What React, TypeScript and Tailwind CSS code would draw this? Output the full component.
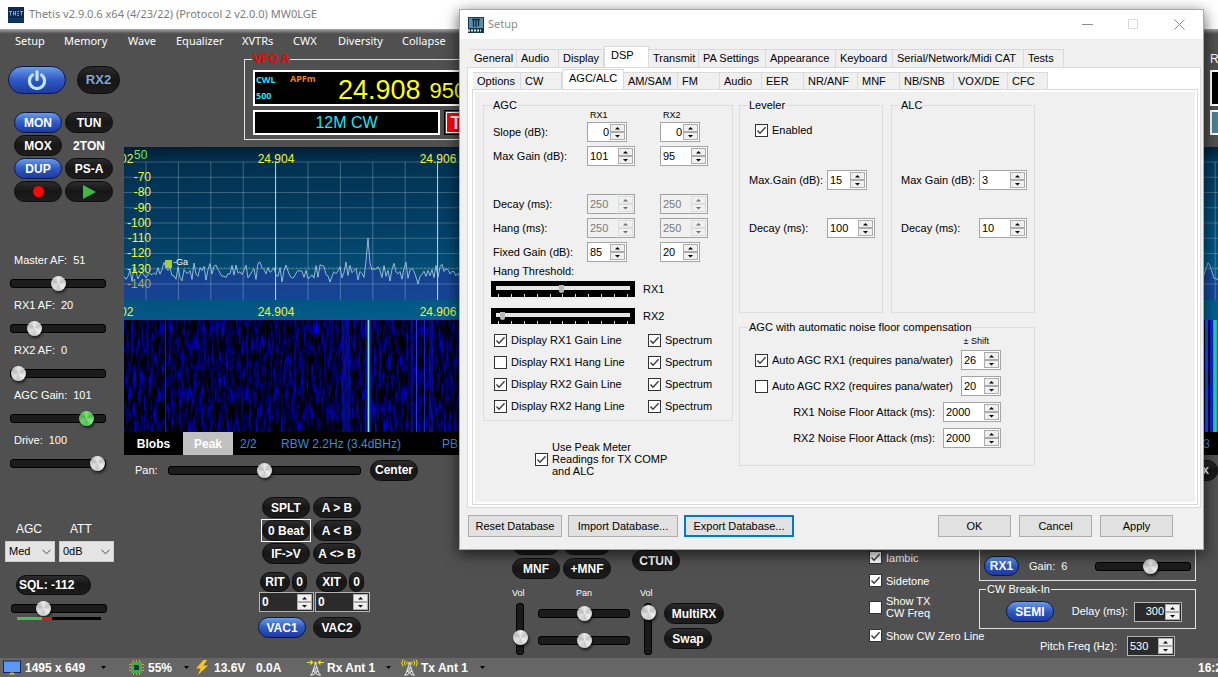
import { FC, ReactNode, useState } from "react";
import clsx from "clsx";

const pillBase = "flex items-center justify-center rounded-full border text-xs font-bold whitespace-nowrap";
const pillDark = "border-[#0c0c0c] bg-linear-to-b from-[#2b2b2b] via-[#161616] to-[#1d1d1d] text-white";
const pillBlue = "border-[#0b1a45] bg-linear-to-b from-[#6d9be6] via-[#2f59c4] to-[#1f3a9e] text-white";

const Pill: FC<{ children: ReactNode; on?: boolean; className?: string; label?: string }> = ({
    children,
    on,
    className = "w-12 h-[21px]",
    label,
}) => (
    <button type="button" aria-label={label} className={clsx(pillBase, on ? pillBlue : pillDark, className)}>
        {children}
    </button>
);

const thumb =
    "[&::-webkit-slider-thumb]:appearance-none [&::-webkit-slider-thumb]:size-[15px] [&::-webkit-slider-thumb]:rounded-full [&::-webkit-slider-thumb]:shadow-[1px_2px_3px_#000000aa]";
const silver =
    "[&::-webkit-slider-thumb]:bg-[conic-gradient(#e8e8e8,#c4c4c4,#efefef,#cacaca,#e0e0e0,#bcbcbc,#e8e8e8)]";
const green =
    "[&::-webkit-slider-thumb]:bg-[conic-gradient(#7fe07f,#4cb84c,#8be88b,#54c054,#6cd06c,#48b448,#7fe07f)]";

const Slider: FC<{ label: string; value: number; className?: string; tone?: "silver" | "green" }> = ({
    label,
    value,
    className = "w-24",
    tone = "silver",
}) => (
    <input
        type="range"
        aria-label={label}
        defaultValue={value}
        className={clsx(
            "block h-5 appearance-none bg-transparent",
            "[&::-webkit-slider-runnable-track]:h-[9px] [&::-webkit-slider-runnable-track]:rounded-[3px] [&::-webkit-slider-runnable-track]:border [&::-webkit-slider-runnable-track]:border-black [&::-webkit-slider-runnable-track]:bg-[#1c1c1c]",
            "[&::-webkit-slider-thumb]:mt-[-4px]",
            thumb,
            tone === "green" ? green : silver,
            className
        )}
    />
);

const VSlider: FC<{ label: string; value: number }> = ({ label, value }) => (
    <input
        type="range"
        aria-label={label}
        defaultValue={value}
        className={clsx(
            "block h-[52px] w-4 appearance-none bg-transparent [writing-mode:vertical-lr] [direction:rtl]",
            "[&::-webkit-slider-runnable-track]:w-2 [&::-webkit-slider-runnable-track]:rounded-[3px] [&::-webkit-slider-runnable-track]:border [&::-webkit-slider-runnable-track]:border-black [&::-webkit-slider-runnable-track]:bg-[#1b1b1b]",
            "[&::-webkit-slider-thumb]:ml-[-4px]",
            thumb,
            silver
        )}
    />
);

const Spinner: FC<{
    label: string;
    value: string;
    className?: string;
    disabled?: boolean;
    dark?: boolean;
    right?: boolean;
    bold?: boolean;
}> = ({ label, value, className = "w-12", disabled, dark, right, bold }) => (
    <span
        className={clsx(
            "flex h-5 shrink-0 border p-px",
            dark ? "border-[#b5b5b5] bg-[#2b2b2b] text-white" : "border-[#a5a5a5]",
            !dark && (disabled ? "bg-[#f0f0f0] text-[#7a7a7a]" : "bg-white text-black"),
            className
        )}
    >
        <input
            type="text"
            aria-label={label}
            defaultValue={value}
            disabled={disabled}
            className={clsx("min-w-0 flex-1 px-px", right && "text-right", bold ? "text-xs font-bold" : "text-[11px]")}
        />
        <span className="flex w-[15px] flex-col">
            {["M1 3.5h5L3.5 1z", "M1 1h5L3.5 3.5z"].map((d, i) => (
                <button
                    key={d}
                    type="button"
                    disabled={disabled}
                    aria-label={`${label} ${i === 0 ? "up" : "down"}`}
                    className={clsx(
                        "flex flex-1 items-center justify-center border bg-[#f0f0f0]",
                        disabled ? "border-[#dcdcdc] text-[#6d6d6d]" : "border-[#acacac] text-black"
                    )}
                >
                    <svg width="7" height="4" viewBox="0 0 7 4" fill="currentColor">
                        <path d={d} />
                    </svg>
                </button>
            ))}
        </span>
    </span>
);

const Check: FC<{ children: ReactNode; checked?: boolean; className?: string }> = ({
    children,
    checked,
    className,
}) => (
    <label className={clsx("flex items-center gap-1", className)}>
        <span className="grid size-[13px] shrink-0">
            <input
                type="checkbox"
                defaultChecked={checked}
                className="peer col-start-1 row-start-1 size-[13px] appearance-none border border-[#333333] bg-white"
            />
            <svg
                viewBox="0 0 13 13"
                className="pointer-events-none col-start-1 row-start-1 hidden size-[13px] peer-checked:block"
                fill="none"
                stroke="#3c3c3c"
                strokeWidth="1.4"
            >
                <path d="M2.5 6.5 5 9.2l5.6-6" />
            </svg>
        </span>
        <span className="whitespace-nowrap">{children}</span>
    </label>
);

const Group: FC<{ title: string; children: ReactNode; className?: string }> = ({ title, children, className }) => (
    <fieldset className={clsx("border border-[#dcdcdc]", className)}>
        <legend className="ml-2 h-3 px-px leading-3">{title}</legend>
        {children}
    </fieldset>
);

/* ---------- panadapter ---------- */

const rand = (i: number) => {
    const v = Math.sin(i * 127.1 + 11.7) * 43758.5453;
    return v - Math.floor(v);
};

const trace = Array.from({ length: 550 }, (_, i) => {
    const x = i * 2;
    let y = 125 + (rand(i) - 0.5) * 13 + (rand(i * 3 + 1) - 0.5) * 10;
    if (rand(i * 7 + 5) > 0.94) y += 8;
    if (x === 222) y = 115;
    if (x === 242) y = 114;
    if (x === 244) y = 91;
    if (x === 246) y = 116;
    return `${x},${y.toFixed(1)}`;
}).join(" ");

const vLines = Array.from({ length: 34 }, (_, i) => 22 + i * 32.4);
const hLines = Array.from({ length: 9 }, (_, i) => 15 + i * 15.25);
const dbm = [-70, -80, -90, -100, -110, -120, -130, -140];
const marks = [
    { x: 152, text: "24.904" },
    { x: 314, text: "24.906" },
];

const Spectrum: FC = () => (
    <svg className="block h-[173px] w-full" fontFamily="'Liberation Sans', Arial, sans-serif" fontSize="12">
        <defs>
            <linearGradient id="sky" x1="0" y1="0" x2="0.35" y2="1">
                <stop offset="0" stopColor="#022c49" />
                <stop offset="0.5" stopColor="#034066" />
                <stop offset="1" stopColor="#035f90" />
            </linearGradient>
            <linearGradient id="shade" x1="0" y1="0" x2="0" y2="1">
                <stop offset="0" stopColor="#021a2c" stopOpacity="0.7" />
                <stop offset="1" stopColor="#021a2c" stopOpacity="0" />
            </linearGradient>
        </defs>
        <rect width="100%" height="173" fill="url(#sky)" />
        <rect width="100%" height="14" fill="url(#shade)" />
        <polygon points={`0,153 ${trace} 1098,153`} fill="#2438a0" fillOpacity="0.55" />
        {hLines.map((y) => (
            <line key={y} x1="0" x2="100%" y1={y} y2={y} stroke="#ffffff" strokeOpacity="0.22" />
        ))}
        {vLines.map((x, i) => (
            <line key={x} x1={x} x2={x} y1="15" y2="153" stroke="#ffffff" strokeOpacity={i % 5 === 4 ? 0.8 : 0.25} />
        ))}
        <line x1="60" x2="100%" y1="121" y2="121" stroke="#4fae62" strokeOpacity="0.7" strokeDasharray="2 2" />
        <polyline points={trace} fill="none" stroke="#a9cbe6" strokeOpacity="0.85" strokeWidth="1" />
        <rect x="41" y="113" width="7" height="8" fill="#a4d02c" />
        <text x="49" y="118" fontSize="9" fill="#ffffff">
            -Ga
        </text>
        <text x="-4" y="16" fill="#f0f53a">
            02
        </text>
        <text x="10" y="12" fill="#6bf03a">
            50
        </text>
        {dbm.map((v, i) => (
            <text key={v} x="27" y={34 + i * 15.25} textAnchor="end" fill={v === -140 ? "#a8ad52" : "#f0f53a"}>
                {v}
            </text>
        ))}
        {marks.map((m) => (
            <g key={m.text} fill="#f0f53a" textAnchor="middle">
                <text x={m.x} y="16">
                    {m.text}
                </text>
                <text x={m.x} y="169">
                    {m.text}
                </text>
            </g>
        ))}
        <text x="-4" y="169" fill="#f0f53a">
            02
        </text>
    </svg>
);

const carriers = [
    { x: 41, w: 1, c: "#1a22c8", o: 0.8 },
    { x: 218, w: 8, c: "#0c14d0", o: 0.45 },
    { x: 241, w: 6, c: "#0c14d0", o: 0.5 },
    { x: 243, w: 3, c: "#1d6cf0", o: 0.8 },
    { x: 244, w: 1, c: "#6ff0c0", o: 1 },
    { x: 287, w: 2, c: "#0c14d0", o: 0.5 },
    { x: 292, w: 1, c: "#2a3cf0", o: 0.9 },
    { x: 300, w: 1, c: "#1a2ae0", o: 0.8 },
    { x: 305, w: 4, c: "#0c14d0", o: 0.4 },
    { x: 1081, w: 3, c: "#1060ff", o: 0.9 },
    { x: 1086, w: 3, c: "#0a2ae0", o: 0.9 },
    { x: 1089, w: 4, c: "#20c0e0", o: 0.9 },
    { x: 1090, w: 2, c: "#20e070", o: 0.9 },
    { x: 1093, w: 1, c: "#0a50ff", o: 1 },
];

const Waterfall: FC = () => (
    <svg className="block h-28 w-full bg-black">
        <defs>
            <filter id="noise" x="0" y="0" width="100%" height="100%" colorInterpolationFilters="sRGB">
                <feTurbulence type="fractalNoise" baseFrequency="0.4 0.06" numOctaves="3" seed="4" />
                <feColorMatrix values="0 0 0 0 0  0 0 0 0 0  2 0 0 0 -0.76  0 0 0 0 1" />
            </filter>
        </defs>
        <rect width="100%" height="112" filter="url(#noise)" />
        {carriers.map((c) => (
            <rect key={c.x} x={c.x} y="0" width={c.w} height="112" fill={c.c} fillOpacity={c.o} />
        ))}
    </svg>
);

/* ---------- main window ---------- */

const menu = [
    { text: "Setup", w: "w-[49px]" },
    { text: "Memory", w: "w-16" },
    { text: "Wave", w: "w-12" },
    { text: "Equalizer", w: "w-[66px]" },
    { text: "XVTRs", w: "w-[51px]" },
    { text: "CWX", w: "w-[45px]" },
    { text: "Diversity", w: "w-16" },
    { text: "Collapse", w: "w-16" },
];

const levels = [
    { text: "Master AF:", n: 51, value: 51 },
    { text: "RX1 AF:", n: 20, value: 20 },
    { text: "RX2 AF:", n: 0, value: 0 },
    { text: "AGC Gain:", n: 101, value: 86 },
    { text: "Drive:", n: 100, value: 100 },
];

const PowerIcon: FC = () => (
    <svg width="22" height="22" viewBox="0 0 22 22" fill="none" stroke="#c3e2ff" strokeWidth="3.2" strokeLinecap="round">
        <path d="M6.4 6A7.6 7.6 0 1 0 15.6 6" />
        <path d="M11 2.5v8" />
    </svg>
);

const Combo: FC<{ label: string; value: string; className: string }> = ({ label, value, className }) => (
    <label className={clsx("flex flex-col gap-[5px]", className)}>
        <span className="pl-[11px] text-xs leading-[14px]">{label}</span>
        <span className="grid items-center">
            <select className="col-start-1 row-start-1 h-[21px] appearance-none border border-[#cccccc] bg-[#e4e4e4] pl-[3px] text-[11px] text-black">
                <option>{value}</option>
            </select>
            <svg
                className="pointer-events-none col-start-1 row-start-1 mr-1 justify-self-end"
                width="9"
                height="6"
                viewBox="0 0 9 6"
                fill="none"
                stroke="#444444"
            >
                <path d="M.5.8 4.5 4.8 8.500.8" />
            </svg>
        </span>
    </label>
);

const LeftPanel: FC = () => (
    <aside className="flex w-[124px] shrink-0 flex-col pt-[13px]">
        <div className="flex gap-[11px] pl-2">
            <Pill on label="Power" className="h-7 w-[58px]">
                <PowerIcon />
            </Pill>
            <Pill className="h-7 w-[43px] !text-[#7fa6d6] text-[13px]">RX2</Pill>
        </div>
        <div className="mt-[18px] grid grid-cols-[48px_48px] gap-x-[3px] gap-y-0.5 pl-[14px]">
            <Pill on>MON</Pill>
            <Pill>TUN</Pill>
            <Pill>MOX</Pill>
            <button type="button" className="text-xs font-bold">
                2TON
            </button>
            <Pill on>DUP</Pill>
            <Pill>PS-A</Pill>
            <Pill label="Record">
                <span className="size-[11px] rounded-full bg-[#fb0505]" />
            </Pill>
            <Pill label="Play">
                <svg width="13" height="14" viewBox="0 0 13 14" fill="#3dba45">
                    <path d="M0 0 13 7 0 14z" />
                </svg>
            </Pill>
        </div>
        <div className="mt-[51px] flex flex-col gap-[5px]">
            {levels.map((l) => (
                <div key={l.text} className="flex flex-col gap-1.5 pl-[10px]">
                    <div className="flex gap-1.5 pl-1 text-[11px] leading-[14px]">
                        <span>{l.text}</span>
                        <span>{l.n}</span>
                    </div>
                    <Slider label={l.text} value={l.value} tone={l.n === 101 ? "green" : "silver"} />
                </div>
            ))}
        </div>
        <div className="mt-[49px] flex gap-1 pl-[5px]">
            <Combo label="AGC" value="Med" className="w-[50px]" />
            <Combo label="ATT" value="0dB" className="w-[55px]" />
        </div>
        <div className="mt-[13px] flex flex-col items-start pl-[11px]">
            <Pill className="ml-[5px] h-5 w-[75px] !justify-start pl-0.5">SQL: -112</Pill>
            <Slider label="Squelch" value={30} className="mt-[3px] w-24" />
            <div className="-mt-[1px] ml-1.5 flex h-[3px] w-[84px] bg-black">
                <span className="w-[25px] bg-[#3fc44c]" />
                <span className="w-[10px] bg-[#ee1111]" />
            </div>
        </div>
    </aside>
);

const VfoRow: FC = () => (
    <div className="flex h-[94px] items-start justify-between pl-[120px]">
        <fieldset className="h-[87px] w-[520px] border border-[#e2e2e2]">
            <legend className="ml-[7px] h-3 px-px text-xs leading-3 font-bold text-[#f00000]">VFO A</legend>
            <div className="flex flex-col gap-1 px-2 pt-[5px]">
                <div className="flex h-9 border-2 border-white bg-black">
                    <div className="flex w-[34px] flex-col gap-1 pt-0.5 pl-px font-['Noto_Sans',sans-serif] text-[9px] leading-3 font-bold text-[#19e8f0]">
                        <span>CWL</span>
                        <span>500</span>
                    </div>
                    <span className="w-[49px] pt-px pl-px font-['Noto_Sans',sans-serif] text-[9px] leading-3 font-bold text-[#f08020]">
                        APFm
                    </span>
                    <span className="text-[27px] leading-9 text-[#fbff18]">24.908</span>
                    <span className="ml-[9px] text-[22px] leading-[38px] text-[#fbff18]">950</span>
                </div>
                <div className="flex gap-1">
                    <div className="flex h-[25px] w-[187px] items-center justify-center border-2 border-white bg-black text-base text-[#1ee6f2]">
                        12M CW
                    </div>
                    <button
                        type="button"
                        className="h-[25px] w-9 border border-black bg-[#fb0505] text-lg leading-5 font-bold text-white outline-1 -outline-offset-3 outline-white"
                    >
                        TX
                    </button>
                </div>
            </div>
        </fieldset>
        <div className="flex w-2 flex-col overflow-hidden text-xs">
            <span className="leading-3">R</span>
            <span className="mt-[5px] h-9 w-5 border-2 border-white bg-black" />
            <span className="mt-1 h-[25px] w-5 border-2 border-white bg-[#4b8296]" />
        </div>
    </div>
);

const DisplayFooter: FC = () => (
    <div className="flex h-[23px] items-center bg-black text-xs text-[#3b8ad8]">
        <button type="button" className="h-full w-[59px] font-bold text-white">
            Blobs
        </button>
        <button type="button" className="mr-[7px] h-full w-[50px] bg-[#c0c0c0] font-bold text-white">
            Peak
        </button>
        <span className="w-[41px]">2/2</span>
        <span className="w-[161px]">RBW 2.2Hz (3.4dBHz)</span>
        <span>PB</span>
        <span className="mr-2 ml-auto">3</span>
    </div>
);

const SplitControls: FC = () => (
    <div className="flex w-[112px] flex-col">
        <div className="ml-1 grid grid-cols-[48px_48px] gap-x-[3px] gap-y-0.5">
            <Pill>SPLT</Pill>
            <Pill>A &gt; B</Pill>
            <div className="outline-1 outline-white">
                <Pill>0 Beat</Pill>
            </div>
            <Pill>A &lt; B</Pill>
            <Pill>IF-&gt;V</Pill>
            <Pill>A &lt;&gt; B</Pill>
        </div>
        <div className="mt-2 ml-0.5 flex gap-0.5">
            <Pill className="h-5 w-[30px]">RIT</Pill>
            <Pill className="mr-[7px] h-5 w-[15px]">0</Pill>
            <Pill className="h-5 w-[31px]">XIT</Pill>
            <Pill className="h-5 w-[15px]">0</Pill>
        </div>
        <div className="ml-px flex gap-px">
            <Spinner label="RIT offset" value="0" dark bold className="w-[55px]" />
            <Spinner label="XIT offset" value="0" dark bold className="w-[55px]" />
        </div>
        <div className="mt-[5px] flex gap-[7px]">
            <Pill on>VAC1</Pill>
            <Pill>VAC2</Pill>
        </div>
    </div>
);

const MultiControls: FC = () => (
    <div className="flex flex-col pt-[37px]">
        <div className="flex">
            <div className="grid grid-cols-[48px_48px] gap-[3px]">
                <Pill>ANF</Pill>
                <Pill>BIN</Pill>
                <Pill>MNF</Pill>
                <Pill>+MNF</Pill>
            </div>
            <div className="mt-4 ml-[21px]">
                <Pill>CTUN</Pill>
            </div>
        </div>
        <div className="mt-2 flex gap-[10px] text-[9px] leading-3">
            <div className="flex w-4 flex-col gap-1">
                <span>Vol</span>
                <VSlider label="Main volume" value={25} />
            </div>
            <div className="flex flex-col">
                <span className="text-center">Pan</span>
                <Slider label="Main pan" value={50} className="mt-1 w-[92px]" />
                <Slider label="Sub pan" value={50} className="mt-[7px] w-[92px]" />
            </div>
            <div className="flex w-4 flex-col gap-1">
                <span>Vol</span>
                <VSlider label="Sub volume" value={96} />
            </div>
            <div className="mt-4 -ml-0.5 flex flex-col gap-1">
                <Pill className="h-[21px] w-[60px]">MultiRX</Pill>
                <Pill>Swap</Pill>
            </div>
        </div>
    </div>
);

const CwControls: FC = () => (
    <div className="mr-[22px] ml-auto flex pt-9 text-[11px]">
        <div className="flex w-[110px] flex-col pt-[18px] leading-3">
            <Check checked>Iambic</Check>
            <Check checked className="mt-[10px]">
                Sidetone
            </Check>
            <Check className="mt-2">
                Show TX
                <br />
                CW Freq
            </Check>
            <Check checked className="mt-[10px]">
                Show CW Zero Line
            </Check>
        </div>
        <div className="flex w-[217px] flex-col">
            <div className="flex h-12 items-end border border-[#e2e2e2] px-1 pb-1">
                <Pill on className="h-5 w-[35px]">
                    RX1
                </Pill>
                <span className="ml-[10px] flex h-5 items-center gap-1.5">
                    <span>Gain:</span>
                    <span>6</span>
                </span>
                <Slider label="Gain" value={60} className="ml-auto w-24" />
            </div>
            <fieldset className="mt-0.5 border border-[#e2e2e2]">
                <legend className="ml-1.5 h-3 px-px leading-3">CW Break-In</legend>
                <div className="flex h-[33px] items-center pl-[26px]">
                    <Pill on>SEMI</Pill>
                    <span className="mr-1.5 ml-auto">Delay (ms):</span>
                    <Spinner label="Delay" value="300" dark right className="mr-[13px] w-12" />
                </div>
            </fieldset>
            <div className="mt-[7px] flex items-center justify-end gap-[10px] pr-[21px]">
                <span>Pitch Freq (Hz):</span>
                <Spinner label="Pitch" value="530" dark className="w-12" />
            </div>
        </div>
    </div>
);

const Caret: FC<{ className?: string }> = ({ className }) => (
    <svg width="5" height="3" viewBox="0 0 5 3" className={className}>
        <path d="M0 0h5L2.500 3z" fill="#000000" />
    </svg>
);

const Antenna: FC<{ mode: "rx" | "tx" }> = ({ mode }) => (
    <svg width="17" height="17" viewBox="0 0 17 17" fill="none" className="mr-[3px]">
        {mode === "rx" ? (
            <path d="M0 3.500h5M3.500 1.500l2 2-2 2M17 3.500h-5M13.500 1.500l-2 2 2 2" stroke="#f2e21c" strokeWidth="1.2" />
        ) : (
            <path
                d="M2 .5Q-.5 4 2 7.500M4.200 1.500Q2.500 4 4.200 6.500M6.200 2.500Q5.500 4 6.200 5.500M15 .5Q17.500 4 15 7.500M12.800 1.500Q14.500 4 12.800 6.500M10.800 2.500Q11.500 4 10.800 5.500"
                stroke="#f2e21c"
            />
        )}
        <path d="M8.500 4 4.500 16M8.500 4l4 12M7 9h3M6 12h5M6 12l4-3M11 16l-5-4M6 16l5-4M3 16h3M11 16h3" stroke="#e8e8e8" />
        <circle cx="8.500" cy="4" r="1.300" fill="#f2e21c" />
    </svg>
);

const StatusBar: FC = () => (
    <footer className="mt-auto flex h-[19px] items-center bg-[#666666] pl-[3px] text-xs font-bold whitespace-nowrap">
        <svg width="18" height="15" viewBox="0 0 18 15" className="mr-1">
            <rect x=".5" y="1" width="17" height="11.500" fill="#5b97f5" stroke="#142a5c" />
            <path d="M6 14.500h6l-1.500-2h-3z" fill="#e2b23c" />
        </svg>
        <span className="w-[76px]">1495 x 649</span>
        <Caret />
        <svg width="15" height="15" viewBox="0 0 15 15" className="mr-1 ml-[23px]">
            <path d="M4.500 0v15M7.500 0v15M10.500 0v15M0 4.500h15M0 7.500h15M0 10.500h15" stroke="#f09a1c" />
            <rect x="2" y="2" width="11" height="11" rx="1" fill="#46a852" />
            <rect x="5" y="5" width="5" height="5" fill="#173d33" />
        </svg>
        <span className="w-9">55%</span>
        <Caret />
        <svg width="12" height="15" viewBox="0 0 12 15" className="mr-1.5 ml-[7px]">
            <path d="M7.500 0 0 8.500h4.500L2 15l10-9.500H7.500L11 0z" fill="#f8c41e" />
        </svg>
        <span className="w-[42px]">13.6V</span>
        <span className="w-[51px]">0.0A</span>
        <Antenna mode="rx" />
        <span className="w-[59px]">Rx Ant 1</span>
        <Caret className="mr-[10px]" />
        <Antenna mode="tx" />
        <span className="w-[59px]">Tx Ant 1</span>
        <Caret />
        <span className="ml-auto w-5 overflow-hidden">16:25</span>
    </footer>
);

/* ---------- setup dialog ---------- */

const mainTabs = [
    { text: "General", w: "w-[47px]" },
    { text: "Audio", w: "w-[42px]" },
    { text: "Display", w: "w-[45px]" },
    { text: "DSP", w: "w-[45px]" },
    { text: "Transmit", w: "w-[50px]" },
    { text: "PA Settings", w: "w-[67px]" },
    { text: "Appearance", w: "w-[70px]" },
    { text: "Keyboard", w: "w-[57px]" },
    { text: "Serial/Network/Midi CAT", w: "w-[131px]" },
    { text: "Tests", w: "w-10" },
];

const dspTabs = [
    { text: "Options", w: "w-12" },
    { text: "CW", w: "w-[41px]" },
    { text: "AGC/ALC", w: "w-[62px]" },
    { text: "AM/SAM", w: "w-[54px]" },
    { text: "FM", w: "w-[42px]" },
    { text: "Audio", w: "w-[42px]" },
    { text: "EER", w: "w-[42px]" },
    { text: "NR/ANF", w: "w-[54px]" },
    { text: "MNF", w: "w-[42px]" },
    { text: "NB/SNB", w: "w-[54px]" },
    { text: "VOX/DE", w: "w-[54px]" },
    { text: "CFC", w: "w-10" },
];

const Tabs: FC<{ tabs: { text: string; w: string }[]; initial: string; className?: string }> = ({
    tabs,
    initial,
    className,
}) => {
    const [current, setCurrent] = useState(initial);
    return (
        <div role="tablist" className={clsx("flex items-end", className)}>
            {tabs.map((t) => (
                <button
                    key={t.text}
                    type="button"
                    role="tab"
                    aria-selected={t.text === current}
                    onClick={() => setCurrent(t.text)}
                    className={clsx(
                        "shrink-0 border border-b-0 border-[#dadada] text-left whitespace-nowrap",
                        t.text === current ? "h-[21px] bg-white pb-1 pl-1.5" : "h-[18px] border-l-0 bg-[#f0f0f0] pl-1",
                        t.w
                    )}
                >
                    {t.text}
                </button>
            ))}
        </div>
    );
};

const agcRows = [
    { label: "Slope (dB):", a: "0", b: "0", w: "w-10", right: true },
    { label: "Max Gain (dB):", a: "101", b: "95", w: "w-12" },
    null,
    { label: "Decay (ms):", a: "250", b: "250", w: "w-12", disabled: true },
    { label: "Hang (ms):", a: "250", b: "250", w: "w-12", disabled: true },
    { label: "Fixed Gain (dB):", a: "85", b: "20", w: "w-10" },
];

const lineChecks = [
    { text: "Display RX1 Gain Line", on: true },
    { text: "Display RX1 Hang Line", on: false },
    { text: "Display RX2 Gain Line", on: true },
    { text: "Display RX2 Hang Line", on: true },
];

const Threshold: FC<{ name: string; value: number }> = ({ name, value }) => (
    <div className="flex h-4 items-center gap-2">
        <div className="flex h-4 w-36 flex-col justify-between bg-black px-[5px] pt-[3px]">
            <input
                type="range"
                aria-label={`${name} hang threshold`}
                defaultValue={value}
                className="block h-2 w-full appearance-none bg-transparent [&::-webkit-slider-runnable-track]:h-1 [&::-webkit-slider-runnable-track]:bg-[#e4e4e4] [&::-webkit-slider-thumb]:-mt-px [&::-webkit-slider-thumb]:h-2 [&::-webkit-slider-thumb]:w-[5px] [&::-webkit-slider-thumb]:appearance-none [&::-webkit-slider-thumb]:rounded-b-sm [&::-webkit-slider-thumb]:bg-[#b8b8b8]"
            />
            <div className="flex h-[3px] justify-between px-0.5">
                {Array.from({ length: 11 }, (_, i) => (
                    <span key={i} className="w-px bg-[#dddddd]" />
                ))}
            </div>
        </div>
        <span>{name}</span>
    </div>
);

const AgcGroup: FC = () => (
    <Group title="AGC" className="h-[322px] w-[250px]">
        <div className="flex flex-col pl-[7px]">
            <div className="grid grid-cols-[94px_73px_1fr] pl-0.5 text-[9px] leading-[9px]">
                <span className="col-start-2 pl-[3px]">RX1</span>
                <span className="pl-[3px]">RX2</span>
            </div>
            {agcRows.map((r, i) =>
                r ? (
                    <div key={r.label} className="grid h-6 grid-cols-[94px_73px_1fr] items-center pl-0.5">
                        <span>{r.label}</span>
                        <Spinner
                            label={`RX1 ${r.label}`}
                            value={r.a}
                            className={r.w}
                            right={r.right}
                            disabled={r.disabled}
                        />
                        <Spinner
                            label={`RX2 ${r.label}`}
                            value={r.b}
                            className={r.w}
                            right={r.right}
                            disabled={r.disabled}
                        />
                    </div>
                ) : (
                    <div key={i} className="h-6" />
                )
            )}
            <span className="pl-0.5 leading-[14px]">Hang Threshold:</span>
            <div className="mt-[3px] flex flex-col gap-[11px]">
                <Threshold name="RX1" value={49} />
                <Threshold name="RX2" value={3} />
            </div>
            <div className="mt-[5px] pl-[3px]">
                {lineChecks.map((c) => (
                    <div key={c.text} className="grid h-[22px] grid-cols-[154px_1fr] items-center">
                        <Check checked={c.on}>{c.text}</Check>
                        <Check checked>Spectrum</Check>
                    </div>
                ))}
            </div>
        </div>
    </Group>
);

const LevelerFields: FC<{ first: string; gain: string; gainW: string; decay: string }> = ({
    first,
    gain,
    gainW,
    decay,
}) => (
    <div className="grid grid-cols-[78px_1fr] items-center gap-y-7 pl-[9px]">
        <span>{first}</span>
        <Spinner label={first} value={gain} className={gainW} />
        <span>Decay (ms):</span>
        <Spinner label="Decay" value={decay} />
    </div>
);

const NoiseFloorGroup: FC = () => (
    <Group title="AGC with automatic noise floor compensation" className="h-[145px]">
        <div className="flex flex-col gap-1.5 pt-0.5 pr-[33px] pl-[15px]">
            <span className="-mb-[3px] self-end pr-3 text-[9px] leading-3">± Shift</span>
            <div className="flex items-center justify-between">
                <Check checked>Auto AGC RX1 (requires pana/water)</Check>
                <Spinner label="RX1 shift" value="26" className="w-10" />
            </div>
            <div className="flex items-center justify-between">
                <Check>Auto AGC RX2 (requires pana/water)</Check>
                <Spinner label="RX2 shift" value="20" className="w-10" />
            </div>
            <div className="flex items-center justify-end gap-2">
                <span>RX1 Noise Floor Attack (ms):</span>
                <Spinner label="RX1 attack" value="2000" className="w-[58px]" />
            </div>
            <div className="flex items-center justify-end gap-2">
                <span>RX2 Noise Floor Attack (ms):</span>
                <Spinner label="RX2 attack" value="2000" className="w-[58px]" />
            </div>
        </div>
    </Group>
);

const DialogButton: FC<{ children: ReactNode; className: string }> = ({ children, className }) => (
    <button type="button" className={clsx("h-[22px] bg-[#e1e1e1] text-[11px]", className)}>
        {children}
    </button>
);

const SetupDialog: FC = () => (
    <section
        role="dialog"
        aria-label="Setup"
        className="absolute top-[9px] right-[14px] left-[459px] border border-[#a8a8a8] bg-[#f0f0f0] text-[11px] text-black shadow-[0_4px_14px_#000000aa]"
    >
        <header className="flex h-[29px] items-center bg-white pl-2 text-[#8c8c8c]">
            <svg width="16" height="16" viewBox="0 0 16 16" className="mr-1">
                <rect width="16" height="16" fill="#17384a" />
                <rect x="1" y="1" width="14" height="10" fill="#5b8ea6" />
                <path d="M5.500 3v7M8 3v7M10.500 3v6M4 2.500h8" stroke="#0e2740" strokeWidth="1.3" />
                <path d="M0 13.500h13" stroke="#d5e4ea" strokeWidth="2" strokeDasharray="2 1" />
            </svg>
            <h2 className="font-['Noto_Sans',sans-serif] text-[11px]">Setup</h2>
            <div className="mr-[18px] ml-auto flex items-center gap-[35px]">
                {["M0 5.500h11", "M.5.5h9v9h-9z", "M.5.500l10 10M10.500.5l-10 10"].map((d, i) => (
                    <button key={d} type="button" aria-label={["Minimize", "Maximize", "Close"][i]}>
                        <svg width="11" height="11" fill="none" stroke={i === 1 ? "#d8d8d8" : "#8a8a8a"}>
                            <path d={d} />
                        </svg>
                    </button>
                ))}
            </div>
        </header>
        <Tabs tabs={mainTabs} initial="DSP" className="mt-[7px] ml-[10px]" />
        <div className="mr-0.5 ml-[7px] border border-[#dadada] bg-white pt-px pr-[3px] pb-[3px] pl-[5px]">
            <Tabs tabs={dspTabs} initial="AGC/ALC" />
            <div className="flex h-[414px] flex-col border-2 border-white bg-[#f0f0f0] pt-[7px] pl-2 outline-1 outline-[#dadada]">
                <div className="flex gap-[6px]">
                    <div className="flex flex-col">
                        <AgcGroup />
                        <Check checked className="mt-5 ml-[52px] leading-3">
                            Use Peak Meter
                            <br />
                            Readings for TX COMP
                            <br />
                            and ALC
                        </Check>
                    </div>
                    <div className="flex w-[296px] flex-col gap-2">
                        <div className="flex gap-2">
                            <Group title="Leveler" className="h-[214px] w-36">
                                <Check checked className="mt-[9px] mb-[30px] h-5 pl-[15px]">
                                    Enabled
                                </Check>
                                <LevelerFields first="Max.Gain (dB):" gain="15" gainW="w-10" decay="100" />
                            </Group>
                            <Group title="ALC" className="h-[214px] w-36">
                                <div className="h-[59px]" />
                                <LevelerFields first="Max Gain (dB):" gain="3" gainW="w-12" decay="10" />
                            </Group>
                        </div>
                        <NoiseFloorGroup />
                    </div>
                </div>
            </div>
        </div>
        <div className="flex items-center gap-1.5 pt-[7px] pr-[30px] pb-3 pl-2">
            <DialogButton className="w-[94px] border border-[#adadad]">Reset Database</DialogButton>
            <DialogButton className="w-[110px] border border-[#adadad]">Import Database...</DialogButton>
            <DialogButton className="w-[110px] border-2 border-[#0078d7]">Export Database...</DialogButton>
            <div className="ml-auto flex gap-2">
                <DialogButton className="w-[73px] border border-[#adadad]">OK</DialogButton>
                <DialogButton className="w-[73px] border border-[#adadad]">Cancel</DialogButton>
                <DialogButton className="w-[73px] border border-[#adadad]">Apply</DialogButton>
            </div>
        </div>
    </section>
);

const App: FC = () => (
    <div className="relative flex min-h-screen flex-col overflow-hidden bg-[#505050] font-['Liberation_Sans',Arial,sans-serif] text-white">
        <header className="flex h-[29px] items-center gap-[5px] bg-white pl-2 font-['Noto_Sans',sans-serif] text-[11px] text-[#7d7d7d]">
            <svg width="16" height="16" viewBox="0 0 16 16">
                <rect width="16" height="16" fill="#0b2a4d" />
                <path d="M0 12h16M0 14h16" stroke="#08407a" />
                <path d="M1 4.500h3M2.500 4.500v4M5.500 4v4.500M7.500 4v4.500M5.500 6.500h2M9 4.500h2M9 6.500h2M9 8.500h2M12 4.500h3M13.500 4.500v4" stroke="#8fc0e8" strokeWidth=".8" />
            </svg>
            <h1>Thetis v2.9.0.6 x64 (4/23/22) (Protocol 2 v2.0.0) MW0LGE</h1>
        </header>
        <nav className="flex h-6 items-center bg-linear-to-b from-[#a8a8a8] to-[#505050] to-20% pl-[15px] font-['Noto_Sans',sans-serif] text-[11px]">
            {menu.map((m) => (
                <a key={m.text} href="#" className={clsx("shrink-0 whitespace-nowrap", m.w)}>
                    {m.text}
                </a>
            ))}
        </nav>
        <main className="flex">
            <LeftPanel />
            <div className="flex min-w-0 flex-1 flex-col">
                <VfoRow />
                <Spectrum />
                <Waterfall />
                <DisplayFooter />
                <div className="flex h-[30px] items-center pl-[11px] text-[11px]">
                    <span className="w-[33px]">Pan:</span>
                    <Slider label="Pan" value={50} className="w-[193px]" />
                    <Pill className="ml-[9px] h-[21px] w-12">Center</Pill>
                    <Pill className="ml-auto h-[21px] w-12 !justify-end pr-2">Max</Pill>
                </div>
                <div className="flex items-start pt-3 pl-[134px]">
                    <SplitControls />
                    <div className="ml-[142px]">
                        <MultiControls />
                    </div>
                    <CwControls />
                </div>
            </div>
        </main>
        <StatusBar />
        <SetupDialog />
    </div>
);

export default App;
